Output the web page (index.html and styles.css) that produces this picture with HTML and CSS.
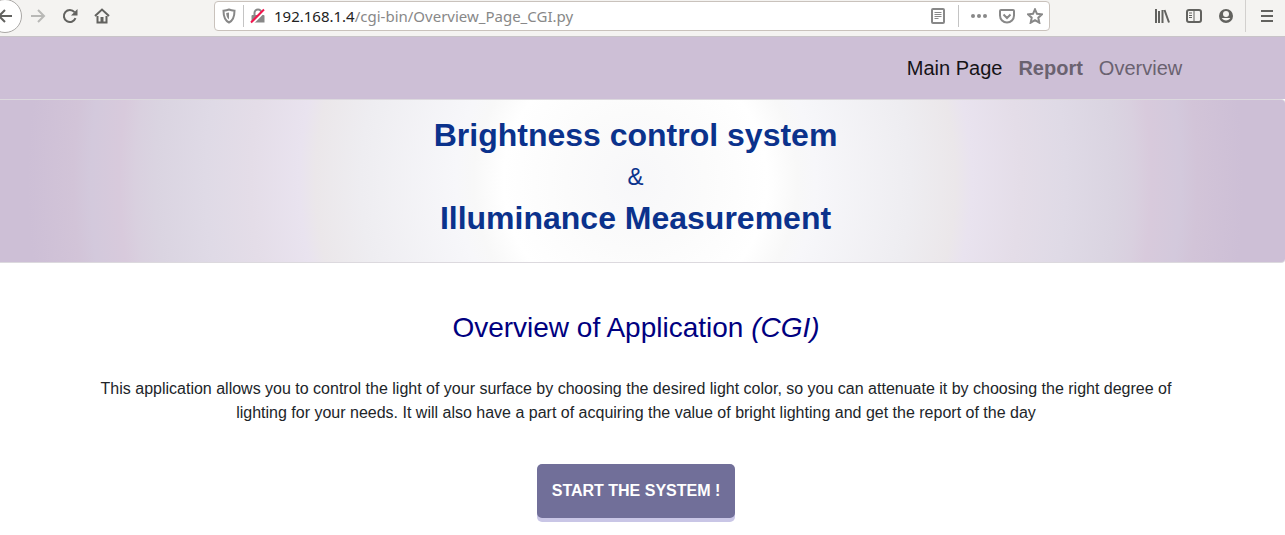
FILE: index.html
```html
<!DOCTYPE html>
<html lang="en">
<head>
<meta charset="utf-8">
<title>Overview of Application</title>
<link rel="stylesheet" href="styles.css">
</head>
<body>
<div class="toolbar">
  <div class="nav-tools">
    <button class="tool back" aria-label="Back"><svg width="16" height="16" viewBox="0 0 16 16"><path d="M15 8H2M8 2L2 8l6 6"/></svg></button>
    <button class="tool faded" aria-label="Forward"><svg width="16" height="16" viewBox="0 0 16 16"><path d="M1 8h13M8 2l6 6-6 6"/></svg></button>
    <button class="tool" aria-label="Reload"><svg width="16" height="16" viewBox="0 0 16 16"><path d="M13.500 10.200A6 6 0 1 1 12.500 4.200"/><path class="solid" d="M15.500 1v6.500H9z"/></svg></button>
    <button class="tool" aria-label="Home"><svg width="16" height="16" viewBox="0 0 16 16"><path d="M1 8l7-6.500L15 8M3.500 8v6.500h9V8"/><path class="solid" d="M6.500 9h3v5h-3z"/></svg></button>
  </div>
  <div class="address">
    <svg width="16" height="16" viewBox="0 0 16 16"><path d="M8 1.500c2 .7 4 1 5.500 1.200C13.500 9 12 12.500 8 14.500 4 12.500 2.500 9 2.500 2.700 4 2.500 6 2.200 8 1.500z"/><path class="solid" d="M8 4.500v7C6 10 5.300 8 5.200 5z"/></svg>
    <span class="divider"></span>
    <svg width="16" height="16" viewBox="0 0 16 16"><path d="M4.500 8V5a3.500 3.500 0 0 1 7 0v3"/><path class="solid" d="M2.500 7h11a1 1 0 0 1 1 1v6.500h-13V8a1 1 0 0 1 1-1z"/><path class="gap" d="M2 16L15 3"/><path class="slash" d="M1 14.500L14 1.500"/></svg>
    <span class="url"><span class="host">192.168.1.4</span>/cgi-bin/Overview_Page_CGI.py</span>
    <svg width="16" height="16" viewBox="0 0 16 16"><rect x="2" y="1" width="12" height="14" rx="1"/><path class="thin" d="M4.500 4.500h7M4.500 6.500h7M4.500 8.500h7M4.500 10.500h4"/></svg>
    <span class="divider end"></span>
    <svg width="16" height="16" viewBox="0 0 16 16"><g class="solid"><circle cx="2" cy="8" r="2"/><circle cx="8" cy="8" r="2"/><circle cx="14" cy="8" r="2"/></g></svg>
    <svg class="spaced" width="16" height="16" viewBox="0 0 16 16"><path d="M2 2h12a1 1 0 0 1 1 1v4.500a7 7 0 0 1-14 0V3a1 1 0 0 1 1-1zM4.500 6.500L8 10l3.500-3.500"/></svg>
    <svg class="spaced" width="16" height="16" viewBox="0 0 16 16"><path d="M8 1.300l2 4.500 5 .5-3.700 3.400 1 5L8 12.200l-4.300 2.500 1-5L1 6.300l5-.5z"/></svg>
  </div>
  <div class="menu-tools">
    <button class="tool" aria-label="Library"><svg width="16" height="16" viewBox="0 0 16 16"><path d="M2 1v14M5 3v12M8.500 2v13M10.500 2L15 14.500"/></svg></button>
    <button class="tool" aria-label="Sidebars"><svg width="16" height="16" viewBox="0 0 16 16"><rect x="1" y="2" width="14" height="12" rx="2"/><path class="thin" d="M8 2v12M3 5h3M3 7.500h3M3 9.500h3"/></svg></button>
    <button class="tool" aria-label="Account"><svg width="16" height="16" viewBox="0 0 16 16"><circle cx="8" cy="8" r="6"/><circle class="solid" cx="8" cy="8" r="6"/><circle class="light" cx="8" cy="6" r="3"/><path class="light" d="M3.700 10h8.600A5 5 0 0 1 3.700 10z"/></svg></button>
    <button class="tool menu" aria-label="Open menu"><svg width="16" height="16" viewBox="0 0 16 16"><path d="M2 3h12M2 8h12M2 13h12"/></svg></button>
  </div>
</div>

<nav class="site-nav">
  <a class="active" href="#main">Main Page</a>
  <a class="strong" href="#report">Report</a>
  <a href="#overview">Overview</a>
</nav>

<header class="banner">
  <h1>Brightness control system</h1>
  <p>&amp;</p>
  <h1>Illuminance Measurement</h1>
</header>

<main class="content">
  <h2>Overview of Application <em>(CGI)</em></h2>
  <p>This application allows you to control the light of your surface by choosing the desired light color, so you can attenuate it by choosing the right degree of lighting for your needs. It will also have a part of acquiring the value of bright lighting and get the report of the day</p>
  <button class="start">START THE SYSTEM !</button>
</main>
</body>
</html>
```
FILE: styles.css
```css
* { box-sizing: border-box; }
body {
  margin: 0;
  background: #fff;
  color: #212529;
  font: 16px/24px "Liberation Sans", Arial, sans-serif;
  overflow-x: hidden;
}
h1, h2, p { margin: 0; }

.toolbar {
  display: flex;
  justify-content: space-between;
  height: 37px;
  background: #f4f3f1;
  border-bottom: 1px solid #c8c4c8;
  overflow: hidden;
}
svg {
  display: block;
  flex: none;
  fill: none;
  stroke: currentColor;
  stroke-width: 2;
}
.solid { fill: currentColor; stroke: none; }
.light { fill: #f4f3f1; stroke: none; }
.thin { stroke-width: 1; }
.gap { stroke: #fff; }
.slash { stroke: #f2154d; }
.tool {
  display: flex;
  flex: none;
  align-items: center;
  justify-content: center;
  width: 32px;
  height: 32px;
  padding: 0;
  border: 0;
  background: none;
  color: #62625f;
}
.faded { color: #b8b8b6; }
.back {
  width: 34px;
  height: 34px;
  border: 1px solid #aaa8a6;
  border-radius: 50%;
  background: #fff;
}
.nav-tools {
  display: flex;
  align-items: center;
  width: 214px;
  height: 32px;
  margin-left: -12px;
}
.address {
  display: flex;
  align-items: center;
  flex: 1;
  height: 30px;
  margin-top: 1px;
  margin-left: 12px;
  padding: 0 6px;
  border: 1px solid #c9c2bc;
  border-radius: 4px;
  background: #fff;
  color: #888;
}
.divider {
  width: 1px;
  height: 22px;
  margin: 0 6px;
  background: #c4c4c4;
}
.divider.end { margin: 0 12px; }
.url {
  flex: 1;
  margin-left: 8px;
  font: 15px/24px "Noto Sans", sans-serif;
  white-space: nowrap;
}
.host { color: #222; }
.spaced { margin-left: 12px; }
.menu-tools {
  display: flex;
  align-items: center;
  width: 139px;
  height: 32px;
  margin-left: 96px;
}
.menu {
  width: 40px;
  margin-left: 3px;
  padding-left: 3px;
  border-left: 1px solid #d2d0ce;
}

.site-nav {
  display: flex;
  justify-content: flex-end;
  gap: 16px;
  padding: 16px 8% 16px 16px;
  background: #cdbfd6;
  font-size: 20px;
  line-height: 30px;
}
.site-nav a { color: #6a6270; text-decoration: none; }
.site-nav .active { color: #151317; }
.site-nav .strong { font-weight: bold; }

.banner {
  padding: 16px 14px 25px 0;
  border: 1px solid #dcd9de;
  border-width: 1px 0;
  border-radius: 0 4px 4px 0;
  background: radial-gradient(circle at calc(50% - 7px) 50%,
    #f7f7f9 0, #fbfbfb 70px, #fff 132px, #f8f8f8 162px, #f7f7fa 180px,
    #eeedf1 275px, #ebe7ea 320px, #e9e3ef 336px, #e4dde8 385px, #dfdae6 430px,
    #dad4e1 480px, #d9d0df 500px, #d8cadc 516px, #d3c9dc 545px, #d2c4d8 562px, #cdbfd6 608px);
  color: #0b328c;
  text-align: center;
}
.banner h1 { font-size: 32px; line-height: 38px; }
.banner p { font-size: 24px; line-height: 36px; margin: 5px 0 4px; }

.content {
  padding: 48px 88px 16px 75px;
  text-align: center;
}
.content h2 {
  color: #000080;
  font-size: 28px;
  font-weight: normal;
  line-height: 34px;
}
.content p { margin: 32px 0 39px; }
.start {
  padding: 15px;
  border: 0;
  border-radius: 5px;
  background: #716f99;
  box-shadow: 0 4px #c9c6e6;
  color: #fff;
  font: bold 16px/24px "Liberation Sans", Arial, sans-serif;
}
```
